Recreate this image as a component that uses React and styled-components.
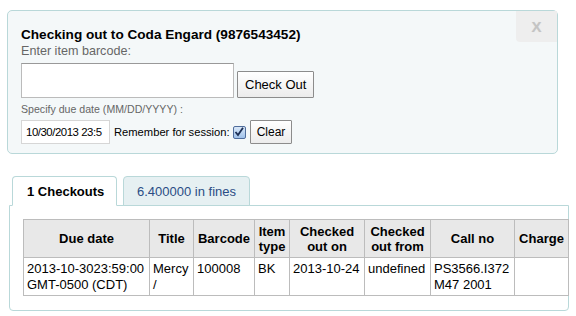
import React from "react";
import styled, { createGlobalStyle } from "styled-components";

const GlobalStyle = createGlobalStyle`
  body {
    margin: 0;
    background: #ffffff;
    font-family: "Liberation Sans", Arial, sans-serif;
    color: #000;
  }
`;

const Page = styled.div`
  width: 576px;
  height: 316px;
  padding: 10px 0 0 7px;
  box-sizing: border-box;
  overflow: hidden;
`;

const CheckoutPanel = styled.div`
  position: relative;
  width: 551px;
  height: 144px;
  box-sizing: border-box;
  border: 1px solid #b9d8d9;
  border-radius: 5px;
  background: #f4f8f9;
  padding: 15px 13px 0 13px;
`;

const CloseBox = styled.div`
  position: absolute;
  top: 0;
  right: 0;
  width: 41px;
  height: 31px;
  background: #eeeeee;
  border-bottom-left-radius: 4px;
  display: flex;
  align-items: center;
  justify-content: center;
  color: #c4c4c4;
  font-weight: bold;
  font-size: 15px;
  text-shadow: 0 0 1px #ddd;
`;

const Title = styled.h3`
  margin: 0;
  font-size: 13.6px;
  line-height: 17px;
  font-weight: bold;
`;

const Label = styled.div`
  font-size: ${(p) => (p.small ? "10.6px" : "12.6px")};
  line-height: ${(p) => (p.small ? "13px" : "17px")};
  color: #666;
  margin-top: ${(p) => (p.small ? "5px" : "0")};
`;

const Row = styled.div`
  display: flex;
  align-items: ${(p) => p.align || "center"};
  gap: ${(p) => p.gap || "3px"};
  margin-top: ${(p) => p.top || "0"};
`;

const BarcodeInput = styled.div`
  width: 213px;
  height: 35px;
  box-sizing: border-box;
  background: #fff;
  border: 1px solid #bbb;
  border-top-color: #999;
`;

const Button = styled.button`
  font-family: "Liberation Sans", Arial, sans-serif;
  font-size: ${(p) => p.size || "13px"};
  height: ${(p) => p.h || "26px"};
  padding: 0 ${(p) => p.pad || "7px"};
  background: linear-gradient(#ffffff, #ececec);
  border: 1px solid #8c8c8c;
  border-radius: 1px;
  color: #000;
  box-sizing: border-box;
  margin: 0;
  white-space: nowrap;
`;

const DateInput = styled.div`
  width: 89px;
  height: 24px;
  box-sizing: border-box;
  background: #fff;
  border: 1px solid #d6d6d6;
  font-size: 11.4px;
  letter-spacing: -0.45px;
  line-height: 22px;
  padding-left: 4px;
  white-space: nowrap;
  overflow: hidden;
`;

const Remember = styled.span`
  font-size: 11.2px;
  margin-left: 1px;
  white-space: nowrap;
`;

const Check = styled.span`
  display: inline-flex;
  align-items: center;
  justify-content: center;
  width: 11px;
  height: 11px;
  border: 1px solid #4f6d9c;
  border-radius: 2px;
  background: linear-gradient(#d9e8f8, #9fc1ea);
  margin: 0 1px 0 0;
`;

const Tabs = styled.div`
  display: flex;
  gap: 6px;
  margin: 22px 0 0 5px;
  position: relative;
  z-index: 1;
`;

const Tab = styled.div`
  height: 30px;
  box-sizing: border-box;
  padding: 0 ${(p) => (p.active ? "14px" : "13px")};
  display: flex;
  align-items: center;
  white-space: nowrap;
  border: 1px solid #b9d8d9;
  border-bottom: ${(p) => (p.active ? "1px solid #fff" : "1px solid #b9d8d9")};
  border-radius: 4px 4px 0 0;
  background: ${(p) => (p.active ? "#ffffff" : "#e6f0f2")};
  color: ${(p) => (p.active ? "#000" : "#2a4d85")};
  font-weight: ${(p) => (p.active ? "bold" : "normal")};
  font-size: 13px;
  width: ${(p) => p.w};
`;

const TabPanel = styled.div`
  margin: -1px 0 0 2px;
  width: 560px;
  height: 106px;
  box-sizing: border-box;
  border: 1px solid #b9d8d9;
  border-radius: 0 0 4px 4px;
  padding: 13px 0 0 13px;
`;

const Table = styled.table`
  border-collapse: collapse;
  table-layout: fixed;
  width: 545px;
  font-size: 13px;
  th, td {
    border: 1px solid #bcbcbc;
    padding: 2px 3px;
  }
  th {
    background: #e8e8e8;
    font-weight: bold;
    text-align: center;
    height: 38px;
    line-height: 15px;
    box-sizing: border-box;
  }
  td {
    vertical-align: top;
    height: 38px;
    line-height: 16px;
    padding-top: 3px;
    box-sizing: border-box;
  }
`;

const columns = [
  { w: 126, label: "Due date" },
  { w: 44, label: "Title" },
  { w: 61, label: "Barcode" },
  { w: 35, label: <>Item<br />type</> },
  { w: 75, label: <>Checked<br />out on</> },
  { w: 66, label: <>Checked<br />out from</> },
  { w: 84, label: "Call no" },
  { w: 54, label: "Charge" },
];

const row = [
  <>2013-10-3023:59:00<br />GMT-0500 (CDT)</>,
  <>Mercy<br />/</>,
  "100008",
  "BK",
  "2013-10-24",
  "undefined",
  <>PS3566.I372<br />M47 2001</>,
  "",
];

export default function App() {
  return (
    <>
      <GlobalStyle />
      <Page>
        <CheckoutPanel>
          <CloseBox>X</CloseBox>
          <Title>Checking out to Coda Engard (9876543452)</Title>
          <Label>Enter item barcode:</Label>
          <Row align="flex-end" top="3px">
            <BarcodeInput />
            <Button h="27px">Check Out</Button>
          </Row>
          <Label small>Specify due date (MM/DD/YYYY) :</Label>
          <Row top="4px">
            <DateInput>10/30/2013 23:5</DateInput>
            <Remember>Remember for session:</Remember>
            <Check>
              <svg width="10" height="10" viewBox="0 0 10 10">
                <path d="M1.5 5 L4 8 L9 0.8" fill="none" stroke="#1c2f55" strokeWidth="1.8" />
              </svg>
            </Check>
            <Button h="24px" size="12px" pad="6px">Clear</Button>
          </Row>
        </CheckoutPanel>
        <Tabs>
          <Tab active w="105px">1 Checkouts</Tab>
          <Tab w="127px">6.400000 in fines</Tab>
        </Tabs>
        <TabPanel>
          <Table>
            <colgroup>
              {columns.map((c, i) => (
                <col key={i} style={{ width: c.w }} />
              ))}
            </colgroup>
            <thead>
              <tr>
                {columns.map((c, i) => (
                  <th key={i}>{c.label}</th>
                ))}
              </tr>
            </thead>
            <tbody>
              <tr>
                {row.map((v, i) => (
                  <td key={i}>{v}</td>
                ))}
              </tr>
            </tbody>
          </Table>
        </TabPanel>
      </Page>
    </>
  );
}
